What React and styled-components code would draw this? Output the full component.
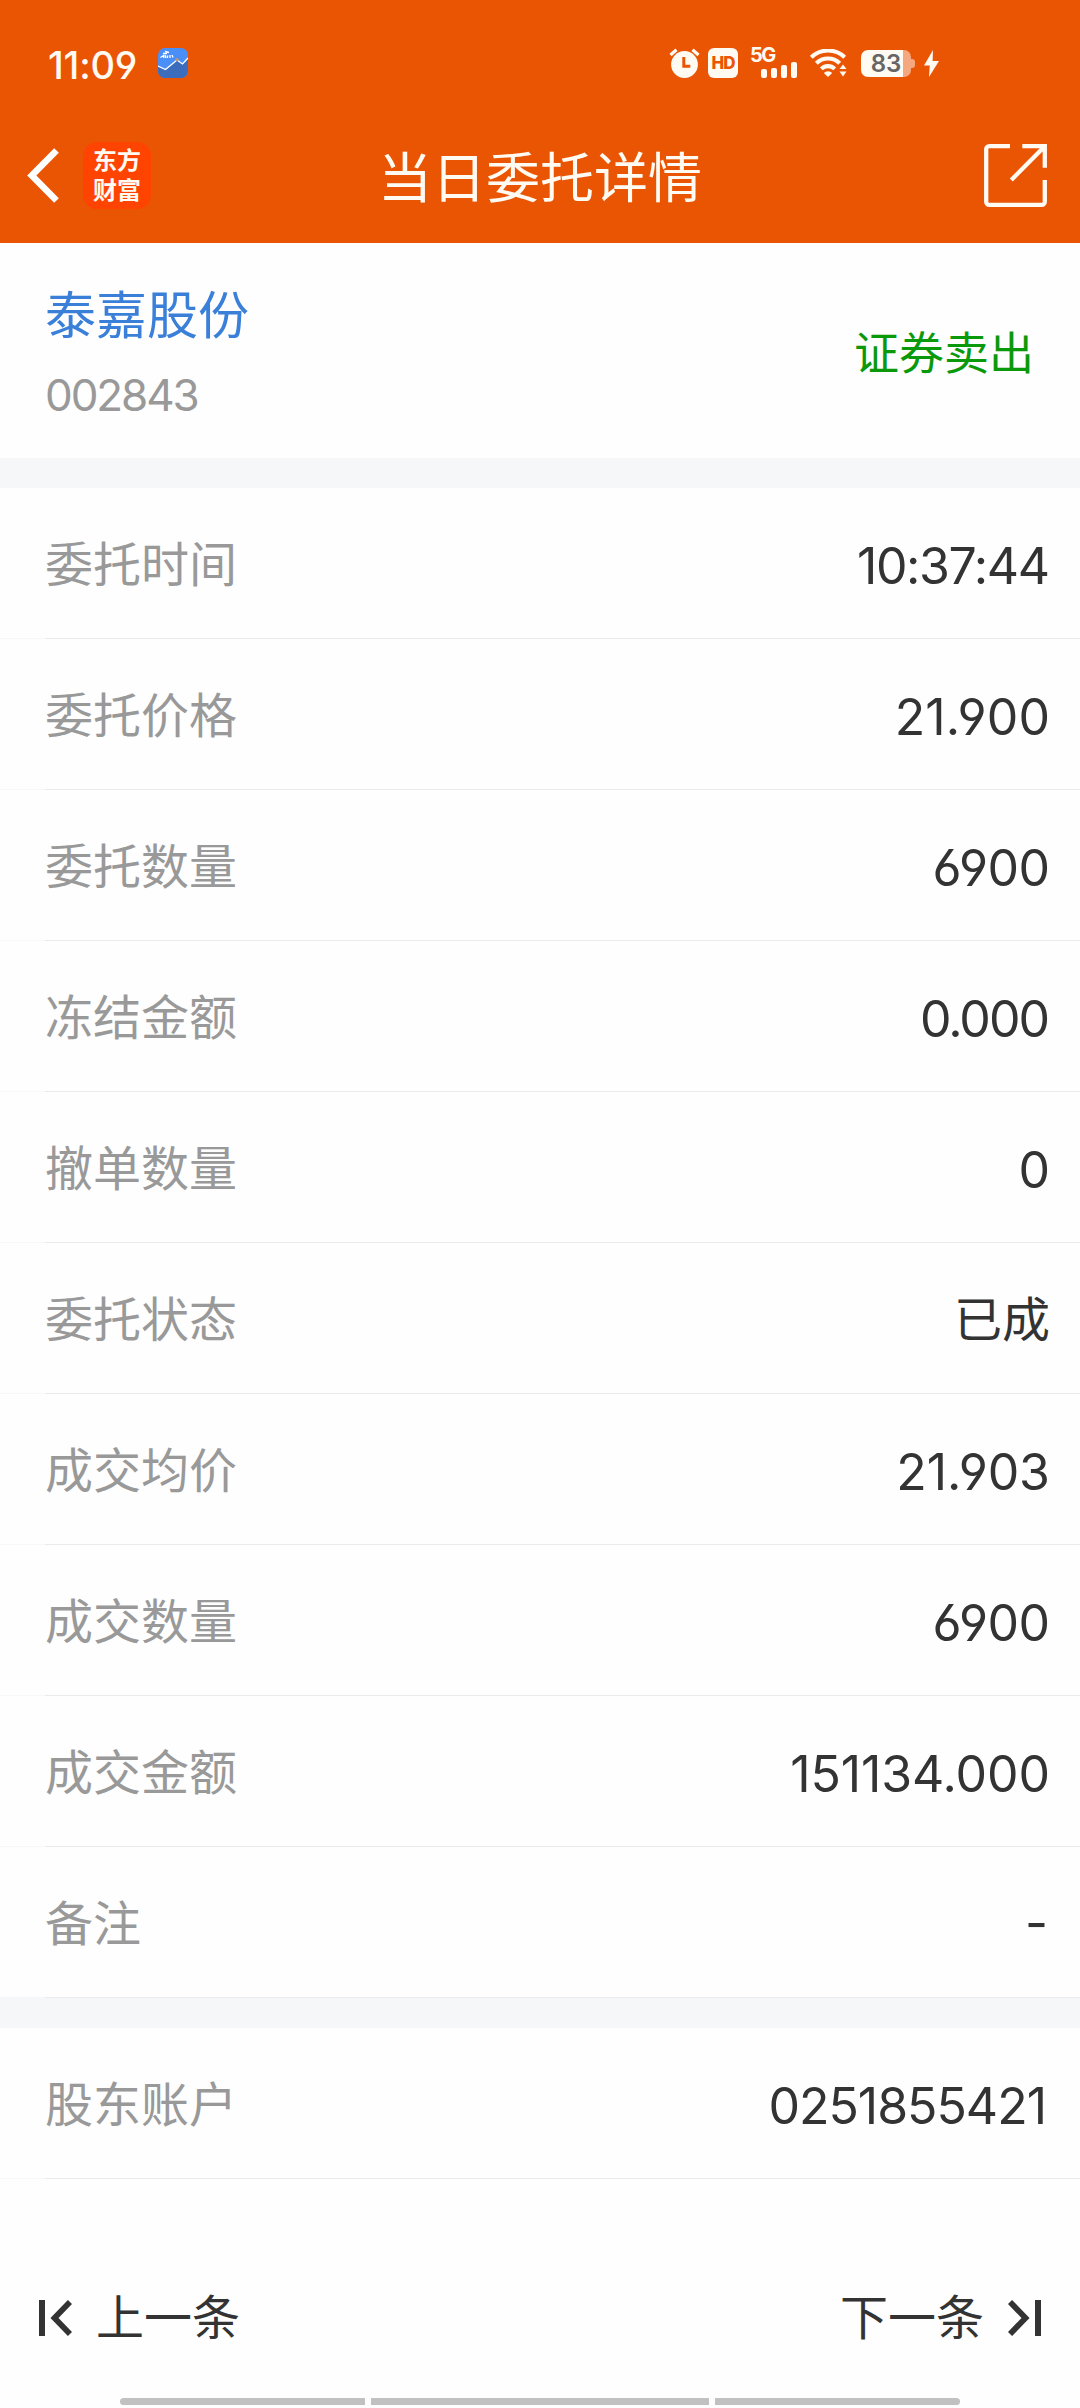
import React from "react";
import styled, { createGlobalStyle } from "styled-components";

const latin = `Inter, "Noto Sans CJK SC", sans-serif`;
const cjk = `"Noto Sans CJK SC", Inter, sans-serif`;
const brand = "#ea5504";
const cream = "#fffaf2";

const GlobalStyle = createGlobalStyle`
  *, *::before, *::after { box-sizing: border-box; }
  html, body { margin: 0; background: #fefefe; }
  body { font-family: ${cjk}; color: #333; }
  svg { display: block; flex: none; }
`;

const Screen = styled.div`
  display: flex;
  flex-direction: column;
  width: 1080px;
  height: 2408px;
  overflow: hidden;
  background: #fefefe;
`;

const Header = styled.header`
  flex: none;
  height: 243px;
  background: ${brand};
  color: ${cream};
`;

const StatusBar = styled.div`
  display: flex;
  align-items: center;
  height: 106px;
  padding: 20px 141px 0 48px;
`;

const Clock = styled.span`
  width: 110px;
  font: 500 38px/40px ${latin};
  font-feature-settings: "cv03", "cv04";
  padding-top: 4px;
  letter-spacing: -0.2px;
`;

const StatusIcons = styled.div`
  display: flex;
  align-items: center;
  margin-left: auto;
`;

const HdBadge = styled.span`
  display: flex;
  align-items: center;
  justify-content: center;
  width: 30px;
  height: 30px;
  margin: 0 12px 0 8px;
  border-radius: 6px;
  background: ${cream};
  color: ${brand};
  font: 800 17px/30px ${latin};
  letter-spacing: -1px;
`;

const Signal = styled.span`
  display: flex;
  flex-direction: column;
  width: 47px;
  height: 30px;
  margin-right: 13px;
`;

const Network = styled.span`
  height: 14px;
  font: 700 20px/15px ${latin};
  letter-spacing: -1.5px;
`;

const Bars = styled.span`
  display: flex;
  align-items: flex-end;
  justify-content: flex-end;
  gap: 4px;
  height: 16px;
`;

const Bar = styled.i`
  width: 6px;
  height: ${(p) => p.$h}px;
  border-radius: 2px;
  background: ${cream};
`;

const Battery = styled.span`
  display: flex;
  align-items: center;
  margin: 0 9px 0 14px;
`;

const BatteryBody = styled.span`
  width: 50px;
  height: 27px;
  border-radius: 7px;
  background: linear-gradient(to right, ${cream} 42.5px, #f5a880 42.5px);
  color: #666;
  font: 600 24px/28px ${latin};
  text-align: center;
`;

const BatteryTip = styled.i`
  width: 4px;
  height: 9px;
  border-radius: 0 3px 3px 0;
  background: #f5a880;
`;

const NavBar = styled.nav`
  display: grid;
  grid-template-columns: 1fr auto 1fr;
  align-items: center;
  height: 137px;
  padding: 2px 27px 0;
`;

const NavStart = styled.div`
  display: flex;
  align-items: center;
  gap: 24px;
`;

const BrandLogo = styled.span`
  display: flex;
  flex-direction: column;
  align-items: center;
  justify-content: center;
  width: 68px;
  height: 67px;
  border-radius: 14px;
  background: #ff4300;
  font: 700 24px/30px ${latin};
`;

const Title = styled.h1`
  margin: 0 0 2px;
  font: 400 54px/70px ${cjk};
`;

const NavEnd = styled.div`
  display: flex;
  justify-content: flex-end;
  padding-right: 6px;
`;

const Stock = styled.section`
  display: flex;
  flex: none;
  align-items: center;
  justify-content: space-between;
  height: 215px;
  padding: 0 46px 0 45px;
`;

const StockName = styled.div`
  font: 400 51px/70px ${cjk};
  color: #3a7fd8;
`;

const StockCode = styled.div`
  margin-top: 18px;
  font: 400 44px/60px ${latin};
  letter-spacing: -2.1px;
  color: #999;
`;

const Side = styled.div`
  font: 400 45px/60px ${cjk};
  color: #0a990a;
`;

const Divider = styled.div`
  flex: none;
  height: 30px;
  background: #f6f7f9;
`;

const Row = styled.div`
  display: flex;
  flex: none;
  align-items: center;
  justify-content: space-between;
  height: 151px;
  padding: 2px 30px 0 45px;
  background: linear-gradient(to right, #f6f7f9 45px, #ebebeb 45px) bottom / 100% 1px no-repeat;
`;

const Label = styled.span`
  font: 400 48px/70px ${latin};
  color: #999;
`;

const Value = styled.span`
  font: 400 50px/70px ${latin};
  font-feature-settings: "cv03", "cv04";
  letter-spacing: ${(p) => p.$track || 0}px;
  margin-right: ${(p) => (p.$inset || 0) - (p.$track || 0)}px;
  padding-top: 2px;
`;

const Dash = styled(Value)`
  padding: 0 0 2px;
`;

const TextValue = styled(Label)`
  color: #333;
`;

const Pager = styled.footer`
  display: flex;
  flex: none;
  align-items: center;
  justify-content: space-between;
  height: 60px;
  margin: 109px 39px 50px;
`;

const PagerButton = styled.div`
  display: flex;
  align-items: center;
  gap: 24px;
  font: 400 48px/60px ${latin};
`;

const HomeBar = styled.div`
  display: flex;
  justify-content: center;
  gap: 6px;
`;

const HomeSegment = styled.i`
  width: ${(p) => p.$w}px;
  height: 7px;
  border-radius: ${(p) => p.$r || "0"};
  background: #c1c1c1;
`;

const AppIcon = () => (
  <svg width="30" height="30" viewBox="0 0 30 30">
    <rect width="30" height="30" rx="7" fill="#4a8ef8" />
    <path d="M0 18 7.5 22 19 12l5.500 4L30 10.500V23a7 7 0 0 1-7 7H7a7 7 0 0 1-7-7Z" fill="#3c6cbc" />
    <path d="M0 18 7.500 21.500 19 12l5.500 4L30 10" fill="none" stroke="#fff" strokeWidth="1.300" />
    <path d="M5 5.500h4M7 3.500l4 1M2.500 9.500l3-2 .500 2.500M7 7l1 3M9.500 7.500v2.500M12 7v3M14 7l1 2.500" fill="none" stroke="#fff" strokeWidth="1.300" />
    <circle cx="19" cy="11.500" r="1.600" fill="#c99463" />
  </svg>
);

const AlarmIcon = () => (
  <svg width="31" height="30" viewBox="0 0 31 30">
    <circle cx="15.500" cy="16.500" r="13.400" fill={cream} />
    <path d="M1.500 7 7.500 1.800M29.500 7l-6-5.200" stroke={cream} strokeWidth="3.200" />
    <path d="M14.800 9v9.200h6.500" fill="none" stroke={brand} strokeWidth="3" />
  </svg>
);

const WifiIcon = () => (
  <svg width="37" height="28" viewBox="0 0 37 28">
    <g fill="none" stroke={cream} strokeWidth="4.100">
      <path d="M1.300 8.300a24 24 0 0 1 33.400 0" />
      <path d="M6.300 14.300a16.500 16.500 0 0 1 23.400 0" />
      <path d="M11.300 19.900a9.500 9.500 0 0 1 13.400 0" />
    </g>
    <path d="M13.800 24a6 6 0 0 1 8.400 0L18 28Z" fill={cream} />
    <path d="M28.500 20 33 14l4.500 6v8h-9Z" fill={brand} />
    <path d="M29.500 20 33 15.500l3.500 4.500ZM29.500 22.500h7L33 27.500Z" fill={cream} />
  </svg>
);

const BoltIcon = () => (
  <svg width="15" height="27" viewBox="0 0 15 27">
    <path d="M9 0 0 15.500h5.800L5 27l10-16H8.600Z" fill={cream} />
  </svg>
);

const BackIcon = () => (
  <svg width="32" height="55" viewBox="0 0 32 55">
    <path d="M29.500 2.500 4.800 27.500l24.700 25" fill="none" stroke="#fff" strokeWidth="6.600" />
  </svg>
);

const ShareIcon = () => (
  <svg width="63" height="63" viewBox="0 0 63 63">
    <g fill="none" stroke={cream} strokeWidth="4.300">
      <path d="M26 2.200H5.200a3 3 0 0 0-3 3v52.600a3 3 0 0 0 3 3h52.600a3 3 0 0 0 3-3V36" />
      <path d="M38.300 2.200h22.500V23.700M60.500 2.500 27.300 36" />
    </g>
  </svg>
);

const PrevIcon = () => (
  <svg width="33" height="36" viewBox="0 0 33 36">
    <path d="M3 0v36" stroke="#333" strokeWidth="6" />
    <path d="M31 2 15.500 18 31 34" fill="none" stroke="#333" strokeWidth="5.800" />
  </svg>
);

const NextIcon = () => (
  <svg width="33" height="36" viewBox="0 0 33 36">
    <path d="M30 0v36" stroke="#333" strokeWidth="6" />
    <path d="M2 2 17.500 18 2 34" fill="none" stroke="#333" strokeWidth="5.800" />
  </svg>
);

const details = [
  { label: "委托时间", value: "10:37:44", track: -1.4 },
  { label: "委托价格", value: "21.900", track: 0.1 },
  { label: "委托数量", value: "6900", track: -0.6 },
  { label: "冻结金额", value: "0.000", track: -2 },
  { label: "撤单数量", value: "0", track: 0 },
  { label: "委托状态", value: "已成", text: true },
  { label: "成交均价", value: "21.903", track: -0.1 },
  { label: "成交数量", value: "6900", track: -0.6 },
  { label: "成交金额", value: "151134.000", track: -0.1 },
  { label: "备注", value: "-", inset: 2 },
];

const account = [{ label: "股东账户", value: "0251855421", track: -1, inset: 3 }];

const DetailValue = ({ item }) => {
  if (item.text) return <TextValue>{item.value}</TextValue>;
  const Cell = item.value === "-" ? Dash : Value;
  return <Cell $track={item.track} $inset={item.inset}>{item.value}</Cell>;
};

const DetailRow = ({ item }) => (
  <Row>
    <Label>{item.label}</Label>
    <DetailValue item={item} />
  </Row>
);

export default function App() {
  return (
    <Screen>
      <GlobalStyle />
      <Header>
        <StatusBar>
          <Clock>11:09</Clock>
          <AppIcon />
          <StatusIcons>
            <AlarmIcon />
            <HdBadge>HD</HdBadge>
            <Signal>
              <Network>5G</Network>
              <Bars>
                {[9, 10, 13, 16].map((h) => <Bar key={h} $h={h} />)}
              </Bars>
            </Signal>
            <WifiIcon />
            <Battery>
              <BatteryBody>83</BatteryBody>
              <BatteryTip />
            </Battery>
            <BoltIcon />
          </StatusIcons>
        </StatusBar>
        <NavBar>
          <NavStart>
            <BackIcon />
            <BrandLogo>
              <span>东方</span>
              <span>财富</span>
            </BrandLogo>
          </NavStart>
          <Title>当日委托详情</Title>
          <NavEnd>
            <ShareIcon />
          </NavEnd>
        </NavBar>
      </Header>
      <Stock>
        <div>
          <StockName>泰嘉股份</StockName>
          <StockCode>002843</StockCode>
        </div>
        <Side>证券卖出</Side>
      </Stock>
      <Divider />
      {details.map((item) => <DetailRow key={item.label} item={item} />)}
      <Divider />
      {account.map((item) => <DetailRow key={item.label} item={item} />)}
      <Pager>
        <PagerButton>
          <PrevIcon />
          上一条
        </PagerButton>
        <PagerButton>
          下一条
          <NextIcon />
        </PagerButton>
      </Pager>
      <HomeBar>
        <HomeSegment $w={245} $r="4px 0 0 4px" />
        <HomeSegment $w={338} />
        <HomeSegment $w={245} $r="0 4px 4px 0" />
      </HomeBar>
    </Screen>
  );
}
